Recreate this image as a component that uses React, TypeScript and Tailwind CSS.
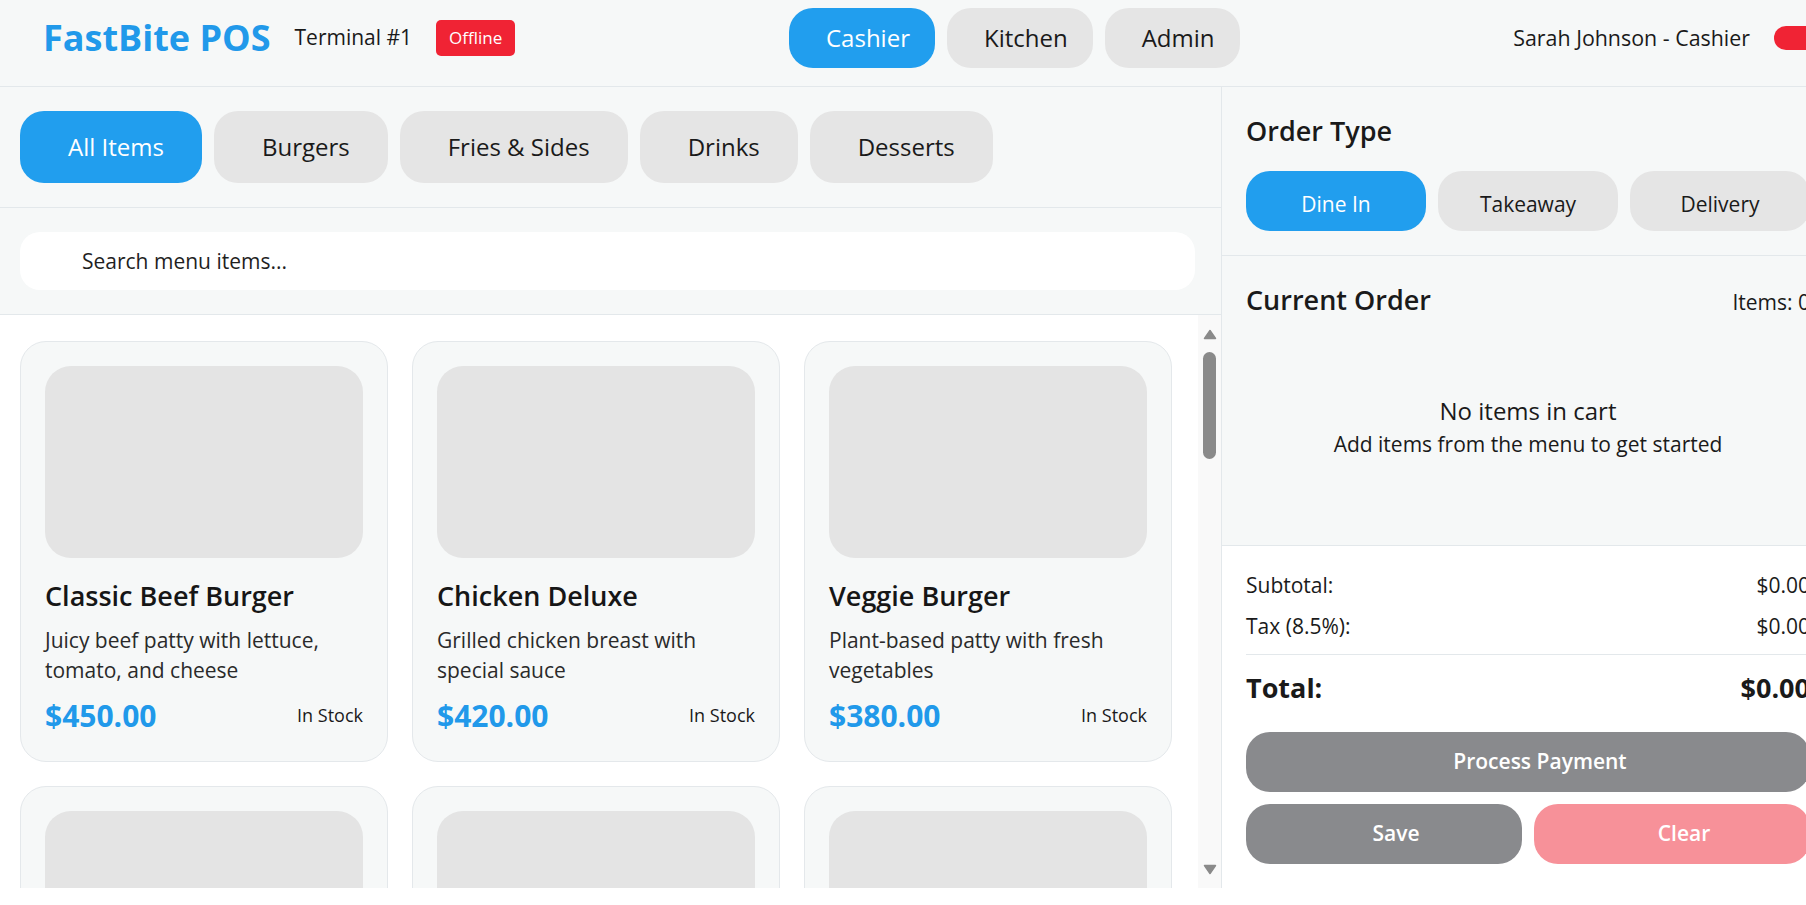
import { type FC } from "react";

type MenuItem = {
  name: string;
  description: string;
  price: number;
};

const menuItems: MenuItem[] = [
  { name: "Classic Beef Burger", description: "Juicy beef patty with lettuce, tomato, and cheese", price: 450 },
  { name: "Chicken Deluxe", description: "Grilled chicken breast with special sauce", price: 420 },
  { name: "Veggie Burger", description: "Plant-based patty with fresh vegetables", price: 380 },
  { name: "Double Cheeseburger", description: "Two beef patties with double cheddar cheese", price: 520 },
  { name: "Spicy Zinger", description: "Crispy chicken fillet with hot chili mayo", price: 440 },
  { name: "Fish Fillet Burger", description: "Golden fish fillet with tartar sauce", price: 400 },
  { name: "Classic Fries", description: "Crispy golden fries with sea salt seasoning", price: 150 },
  { name: "Cheese Fries", description: "Fries topped with melted cheddar sauce", price: 200 },
  { name: "Onion Rings", description: "Battered onion rings with dipping sauce", price: 180 },
  { name: "Chicken Nuggets", description: "Six pieces of crispy chicken nuggets", price: 250 },
  { name: "Coleslaw", description: "Fresh cabbage and carrot in creamy dressing", price: 120 },
  { name: "Mashed Potato", description: "Creamy mashed potato with brown gravy", price: 140 },
  { name: "Cola", description: "Chilled soft drink served with ice cubes", price: 90 },
  { name: "Iced Tea", description: "Freshly brewed tea with lemon and mint", price: 100 },
  { name: "Chocolate Shake", description: "Thick chocolate milkshake with cream", price: 220 },
  { name: "Apple Pie", description: "Warm apple pie with a flaky golden crust", price: 160 },
  { name: "Sundae", description: "Vanilla soft serve with chocolate fudge", price: 170 },
  { name: "Brownie", description: "Rich chocolate brownie with walnut bits", price: 150 },
];

const categories = ["All Items", "Burgers", "Fries & Sides", "Drinks", "Desserts"];
const roles = ["Cashier", "Kitchen", "Admin"];
const orderTypes = ["Dine In", "Takeaway", "Delivery"];

const ItemCard: FC<{ item: MenuItem }> = ({ item }) => {
  return (
    <div className="flex flex-col rounded-[26px] border border-[#e4e8eb] bg-[#f6f8f8] p-6">
      <div className="h-[192px] rounded-[26px] bg-[#e4e4e4]" />
      <h3 className="mt-[18px] text-[27px] font-semibold leading-[1.5] text-[#161616]">{item.name}</h3>
      <p className="mt-2 h-[60px] text-[21px] leading-[30px] text-[#2a2a2a]">{item.description}</p>
      <div className="mt-[9px] flex items-center justify-between">
        <span className="text-[30px] font-bold leading-[43px] text-[#2199ea]">${item.price.toFixed(2)}</span>
        <span className="text-[18px] font-medium text-[#1a1a1a]">In Stock</span>
      </div>
    </div>
  );
};

// drawn to look like the classic scrollbar in the reference
const ScrollTrack: FC = () => {
  return (
    <div className="flex w-[23px] shrink-0 flex-col items-center bg-[#f9f9f9] pb-[13px] pt-[14px]">
      <svg width="14" height="11" viewBox="0 0 14 11">
        <path d="M7 1.5 L12.5 9.5 H1.5 Z" fill="#8a8a8a" stroke="#8a8a8a" strokeWidth="1.5" strokeLinejoin="round" />
      </svg>
      <div className="mt-3 h-[107px] w-[13px] rounded-full bg-[#8a8a8a]" />
      <div className="flex-1" />
      <svg width="14" height="11" viewBox="0 0 14 11">
        <path d="M7 9.5 L12.5 1.5 H1.5 Z" fill="#8a8a8a" stroke="#8a8a8a" strokeWidth="1.5" strokeLinejoin="round" />
      </svg>
    </div>
  );
};

export default function App() {
  return (
    <div className="h-screen w-screen overflow-hidden bg-white font-['Open_Sans',sans-serif] text-[#1a1a1a]">
      <div className="flex h-[888px] w-[1834px] flex-col">
        <header className="flex h-[87px] shrink-0 items-center justify-between border-b border-[#e3e8eb] bg-[#f6f8f8] pb-[18px] pl-[43px] pt-2">
          <div className="flex items-center gap-6">
            <h1 className="text-[36px] font-bold leading-none text-[#2199ea]">FastBite POS</h1>
            <span className="text-[21px]">Terminal #1</span>
            <span className="flex h-9 items-center rounded-[5px] bg-[#f02334] px-[13px] text-[17px] text-white">
              Offline
            </span>
          </div>
          <nav className="flex gap-3">
            {roles.map((role, i) => (
              <button
                key={role}
                className={
                  i === 0
                    ? "h-[60px] rounded-3xl bg-[#219eee] pl-[37px] pr-[25px] text-[24px] text-white"
                    : "h-[60px] rounded-3xl bg-[#e5e5e5] pl-[37px] pr-[25px] text-[24px] text-[#1a1a1a]"
                }
              >
                {role}
              </button>
            ))}
          </nav>
          <div className="flex items-center gap-6">
            <span className="text-[21.4px]">Sarah Johnson - Cashier</span>
            <span className="h-6 w-[60px] rounded-full bg-[#f02334]" />
          </div>
        </header>

        <main className="flex min-h-0 flex-1">
          <section className="flex w-[1221px] flex-col">
            <div className="flex gap-3 border-b border-[#e3e8eb] bg-[#f6f8f8] px-5 py-6">
              {categories.map((cat, i) => (
                <button
                  key={cat}
                  className={
                    i === 0
                      ? "h-[72px] rounded-3xl bg-[#219eee] pl-12 pr-[38px] text-[24px] text-white"
                      : "h-[72px] rounded-3xl bg-[#e5e5e5] pl-12 pr-[38px] text-[24px] text-[#1a1a1a]"
                  }
                >
                  {cat}
                </button>
              ))}
            </div>
            <div className="border-b border-[#e3e8eb] bg-[#f6f8f8] py-6 pl-5 pr-[26px]">
              <input
                type="text"
                placeholder="Search menu items..."
                className="h-[58px] w-full rounded-[20px] bg-white pl-[62px] text-[21px] outline-none placeholder:text-[#1f1f1f]"
              />
            </div>
            <div className="flex min-h-0 flex-1">
              <div className="min-h-0 flex-1 overflow-y-auto bg-white pb-6 pl-5 pt-[26px] [scrollbar-width:none]">
                <div className="grid grid-cols-[repeat(3,368px)] gap-6">
                  {menuItems.map((item) => (
                    <ItemCard key={item.name} item={item} />
                  ))}
                </div>
              </div>
              <ScrollTrack />
            </div>
          </section>

          <aside className="flex w-[613px] flex-col border-l border-[#e3e8eb]">
            <div className="border-b border-[#e3e8eb] bg-[#f6f8f8] p-6">
              <h2 className="mb-[19px] text-[27px] font-semibold leading-[1.5]">Order Type</h2>
              <div className="flex gap-3">
                {orderTypes.map((type, i) => (
                  <button
                    key={type}
                    className={
                      i === 0
                        ? "h-[60px] flex-1 rounded-3xl bg-[#219eee] pt-2 text-[21px] text-white"
                        : "h-[60px] flex-1 rounded-3xl bg-[#e5e5e5] pt-2 text-[21px] text-[#1a1a1a]"
                    }
                  >
                    {type}
                  </button>
                ))}
              </div>
            </div>

            <div className="flex-1 border-b border-[#e3e8eb] bg-[#f6f8f8] px-6 pt-6">
              <div className="flex items-baseline justify-between">
                <h2 className="text-[27px] font-semibold leading-[1.5]">Current Order</h2>
                <span className="text-[21px]">Items: 0</span>
              </div>
              <div className="pt-[73px] text-center">
                <p className="text-[24px] leading-[1.5]">No items in cart</p>
                <p className="text-[21px] leading-[1.5]">Add items from the menu to get started</p>
              </div>
            </div>

            <div className="bg-white p-6">
              <div className="flex justify-between text-[21px]">
                <span>Subtotal:</span>
                <span>$0.00</span>
              </div>
              <div className="mt-[10px] flex justify-between text-[21px]">
                <span>Tax (8.5%):</span>
                <span>$0.00</span>
              </div>
              <div className="mt-[11px] flex justify-between border-t border-[#e3e8eb] pt-[13px] text-[27px] font-bold leading-[1.5]">
                <span>Total:</span>
                <span>$0.00</span>
              </div>
              <button className="mt-6 h-[60px] w-full rounded-3xl bg-[#898a8d] pl-6 text-[21px] font-semibold text-white">
                Process Payment
              </button>
              <div className="mt-3 grid grid-cols-2 gap-3">
                <button className="h-[60px] rounded-3xl bg-[#898a8d] pl-6 text-[21px] font-semibold text-white">
                  Save
                </button>
                <button className="h-[60px] rounded-3xl bg-[#f79199] pl-6 text-[21px] font-semibold text-white">
                  Clear
                </button>
              </div>
            </div>
          </aside>
        </main>
      </div>
    </div>
  );
}
